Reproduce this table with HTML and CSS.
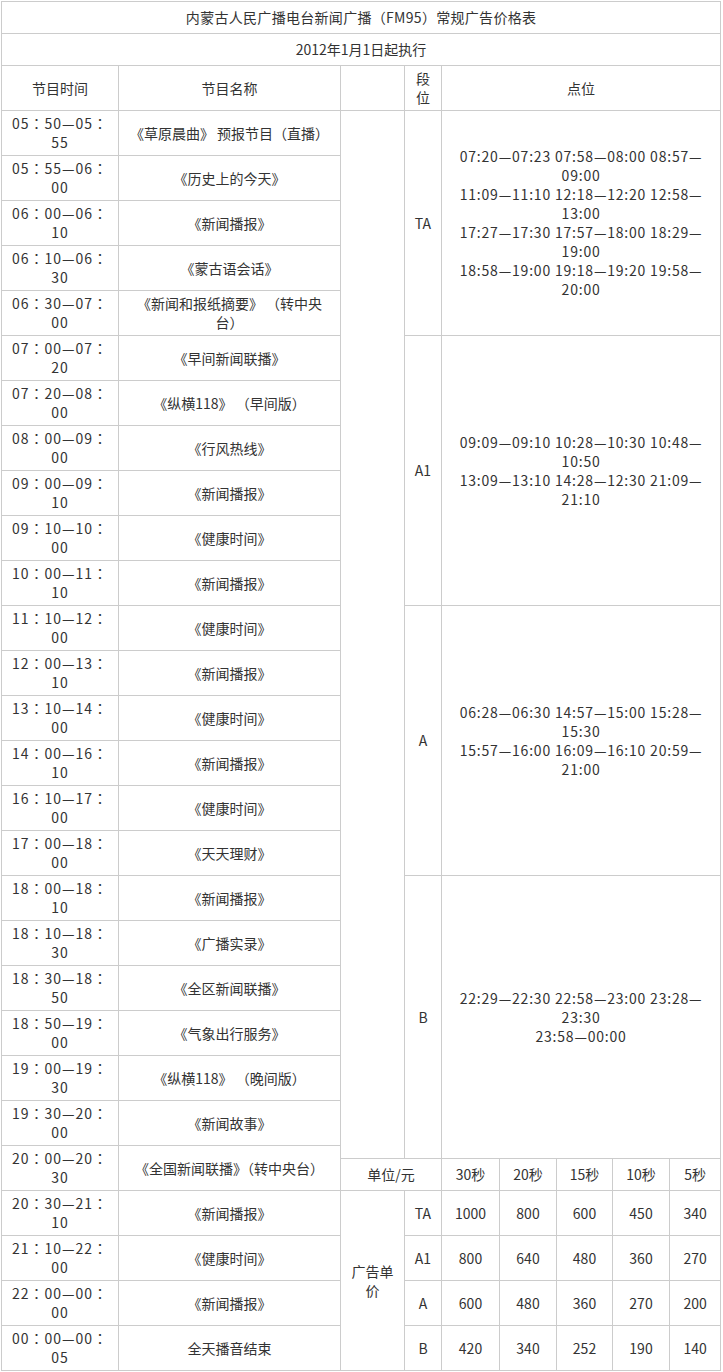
FILE: index.html
```html
<!DOCTYPE html>
<html lang="zh-CN">
<head>
<meta charset="utf-8">
<title>内蒙古人民广播电台新闻广播（FM95）常规广告价格表</title>
<link rel="stylesheet" href="styles.css">
</head>
<body>
<table class="rate-table">
  <colgroup>
    <col class="c-time">
    <col class="c-name">
    <col class="c-blank">
    <col class="c-seg">
    <col class="c-p30">
    <col class="c-p20">
    <col class="c-p15">
    <col class="c-p10">
    <col class="c-p5">
  </colgroup>
  <tbody>
    <tr class="r-title"><td colspan="9" class="title">内蒙古人民广播电台新闻广播（FM95）常规广告价格表</td></tr>
    <tr class="r-title"><td colspan="9">2012年1月1日起执行</td></tr>
    <tr class="r-head">
      <td>节目时间</td>
      <td>节目名称</td>
      <td></td>
      <td>段位</td>
      <td colspan="5">点位</td>
    </tr>

    <tr class="r-body">
      <td>05：50—05：55</td>
      <td>《草原晨曲》 预报节目（直播）</td>
      <td rowspan="24"></td>
      <td rowspan="5">TA</td>
      <td class="pts" colspan="5" rowspan="5">07:20—07:23 07:58—08:00 08:57—09:00<br>11:09—11:10 12:18—12:20 12:58—13:00<br>17:27—17:30 17:57—18:00 18:29—19:00<br>18:58—19:00 19:18—19:20 19:58—20:00</td>
    </tr>
    <tr class="r-body"><td>05：55—06：00</td><td>《历史上的今天》</td></tr>
    <tr class="r-body"><td>06：00—06：10</td><td>《新闻播报》</td></tr>
    <tr class="r-body"><td>06：10—06：30</td><td>《蒙古语会话》</td></tr>
    <tr class="r-body"><td>06：30—07：00</td><td>《新闻和报纸摘要》 （转中央台）</td></tr>

    <tr class="r-body">
      <td>07：00—07：20</td>
      <td>《早间新闻联播》</td>
      <td rowspan="6">A1</td>
      <td class="pts" colspan="5" rowspan="6">09:09—09:10 10:28—10:30 10:48—10:50<br>13:09—13:10 14:28—12:30 21:09—21:10</td>
    </tr>
    <tr class="r-body"><td>07：20—08：00</td><td>《纵横118》 （早间版）</td></tr>
    <tr class="r-body"><td>08：00—09：00</td><td>《行风热线》</td></tr>
    <tr class="r-body"><td>09：00—09：10</td><td>《新闻播报》</td></tr>
    <tr class="r-body"><td>09：10—10：00</td><td>《健康时间》</td></tr>
    <tr class="r-body"><td>10：00—11：10</td><td>《新闻播报》</td></tr>

    <tr class="r-body">
      <td>11：10—12：00</td>
      <td>《健康时间》</td>
      <td rowspan="6">A</td>
      <td class="pts" colspan="5" rowspan="6">06:28—06:30 14:57—15:00 15:28—15:30<br>15:57—16:00 16:09—16:10 20:59—21:00</td>
    </tr>
    <tr class="r-body"><td>12：00—13：10</td><td>《新闻播报》</td></tr>
    <tr class="r-body"><td>13：10—14：00</td><td>《健康时间》</td></tr>
    <tr class="r-body"><td>14：00—16：10</td><td>《新闻播报》</td></tr>
    <tr class="r-body"><td>16：10—17：00</td><td>《健康时间》</td></tr>
    <tr class="r-body"><td>17：00—18：00</td><td>《天天理财》</td></tr>

    <tr class="r-body">
      <td>18：00—18：10</td>
      <td>《新闻播报》</td>
      <td rowspan="7">B</td>
      <td class="pts" colspan="5" rowspan="7">22:29—22:30 22:58—23:00 23:28—23:30<br>23:58—00:00</td>
    </tr>
    <tr class="r-body"><td>18：10—18：30</td><td>《广播实录》</td></tr>
    <tr class="r-body"><td>18：30—18：50</td><td>《全区新闻联播》</td></tr>
    <tr class="r-body"><td>18：50—19：00</td><td>《气象出行服务》</td></tr>
    <tr class="r-body"><td>19：00—19：30</td><td>《纵横118》 （晚间版）</td></tr>
    <tr class="r-body"><td>19：30—20：00</td><td>《新闻故事》</td></tr>
    <tr class="r-split-a"><td rowspan="2">20：00—20：30</td><td rowspan="2">《全国新闻联播》（转中央台）</td></tr>
    <tr class="r-split-b">
      <td colspan="2">单位/元</td>
      <td>30秒</td><td>20秒</td><td>15秒</td><td>10秒</td><td>5秒</td>
    </tr>

    <tr class="r-body">
      <td>20：30—21：10</td><td>《新闻播报》</td>
      <td rowspan="4">广告单价</td>
      <td>TA</td><td>1000</td><td>800</td><td>600</td><td>450</td><td>340</td>
    </tr>
    <tr class="r-body">
      <td>21：10—22：00</td><td>《健康时间》</td>
      <td>A1</td><td>800</td><td>640</td><td>480</td><td>360</td><td>270</td>
    </tr>
    <tr class="r-body">
      <td>22：00—00：00</td><td>《新闻播报》</td>
      <td>A</td><td>600</td><td>480</td><td>360</td><td>270</td><td>200</td>
    </tr>
    <tr class="r-body">
      <td>00：00—00：05</td><td>全天播音结束</td>
      <td>B</td><td>420</td><td>340</td><td>252</td><td>190</td><td>140</td>
    </tr>
  </tbody>
</table>
</body>
</html>
```

FILE: styles.css
```css
html, body {
  margin: 0;
  padding: 0;
  background: #ffffff;
}

body {
  font-family: "Noto Sans CJK SC", "Noto Sans", sans-serif;
  font-size: 14px;
  line-height: 19px;
  color: #333333;
}

.rate-table {
  border-collapse: collapse;
  table-layout: fixed;
  width: 720px;
  margin: 1px 0 0 1px;
}

.rate-table td {
  border: 1px solid #cccccc;
  padding: 0 8px;
  text-align: center;
  vertical-align: middle;
}

.c-time  { width: 117px; }
.c-name  { width: 222px; }
.c-blank { width: 64px; }
.c-seg   { width: 37px; }
.c-p30   { width: 58px; }
.c-p20   { width: 57px; }
.c-p15   { width: 56px; }
.c-p10   { width: 57px; }
.c-p5    { width: 51px; }

/* time column: centred full-width colons, slightly wider digits */
.r-body > td:first-child,
.r-split-a > td:first-child {
  font-family: "Noto Sans CJK JP", "Noto Sans CJK SC", sans-serif;
  letter-spacing: 1px;
  padding: 0 7px;
}

.title { letter-spacing: 0.3px; }

.pts {
  letter-spacing: 0.8px;
  padding: 0 10px;
}

.r-title   { height: 32px; }
.r-head    { height: 45px; }
.r-body    { height: 45px; }
.r-split-a { height: 13px; }
.r-split-b { height: 32px; }
```
